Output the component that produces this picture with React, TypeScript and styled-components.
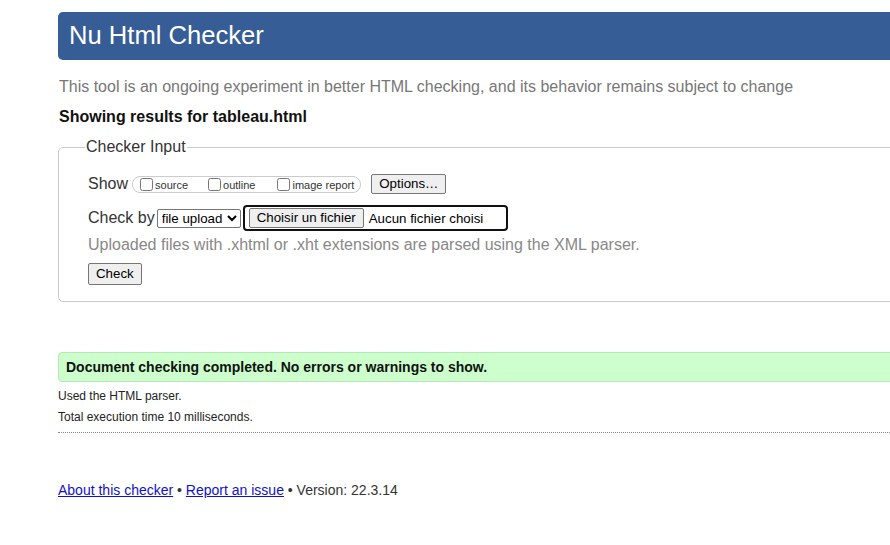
import React from "react";
import styled, { createGlobalStyle } from "styled-components";

const Global = createGlobalStyle`
  html, body { margin: 0; padding: 0; overflow: hidden; background: #fff; }
  body { font-family: "Liberation Sans", Arial, sans-serif; color: #222; }
`;

const Page = styled.div`
  width: 1000px;
  padding: 12px 0 0 58px;
  display: flex;
  flex-direction: column;
`;

const Header = styled.header`
  height: 48px;
  background: #365d95;
  border-radius: 5px;
  display: flex;
  align-items: center;
  padding-left: 11px;
`;

const Title = styled.h1`
  margin: 0;
  font-size: 25.6px;
  font-weight: normal;
  color: #fff;
  line-height: 1;
`;

const Intro = styled.p`
  margin: 17px 0 0 1px;
  font-size: 16px;
  line-height: 20px;
  color: #777;
`;

const ResultsFor = styled.p`
  margin: 10px 0 0 1px;
  font-size: 16px;
  line-height: 20px;
  font-weight: bold;
  color: #111;
`;

const InputFieldset = styled.fieldset`
  margin: 11px 0 0 0;
  border: 1px solid #ccc;
  border-radius: 5px;
  padding: 16px 0 16px 29px;
  min-width: 0;
`;

const Legend = styled.legend`
  font-size: 16px;
  color: #333;
  padding: 0 1px;
  margin-left: -3px;
  line-height: 18px;
`;

const Rows = styled.div`
  display: flex;
  flex-direction: column;
  align-items: flex-start;
`;

const Row = styled.div<{ $h: number; $mt?: number }>`
  display: flex;
  align-items: center;
  height: ${(p) => p.$h}px;
  margin-top: ${(p) => p.$mt ?? 0}px;
`;

const RowLabel = styled.span<{ $mr?: number }>`
  font-size: 16px;
  color: #333;
  margin-right: ${(p) => p.$mr ?? 4}px;
`;

const CheckGroup = styled.span`
  display: inline-flex;
  align-items: center;
  height: 17px;
  border: 1px solid #ccc;
  border-radius: 8px;
  padding: 0 6px 0 7px;
  box-sizing: border-box;
`;

const Box = styled.input`
  width: 13px;
  height: 13px;
  margin: 0 2px 0 0;
`;

const SmallLabel = styled.label<{ $gap?: number }>`
  display: inline-flex;
  align-items: center;
  font-size: 11px;
  color: #333;
  margin-right: ${(p) => p.$gap ?? 0}px;
  padding-top: 1px;
`;

const NativeButton = styled.button<{ $ml?: number }>`
  font-family: "Liberation Sans", Arial, sans-serif;
  font-size: 13.3px;
  color: #000;
  background: #efefef;
  border: 1px solid #767676;
  border-radius: 2px;
  padding: 1px 7px;
  height: 20px;
  line-height: 16px;
  margin-left: ${(p) => p.$ml ?? 0}px;
`;

const Select = styled.select`
  font-family: "Liberation Sans", Arial, sans-serif;
  font-size: 13.3px;
  color: #000;
  height: 19px;
  width: 84px;
  border: 1px solid #767676;
  border-radius: 2px;
  padding: 0;
  background: #fff;
`;

const FileBox = styled.span`
  display: inline-flex;
  align-items: center;
  height: 26px;
  width: 265px;
  box-sizing: border-box;
  border: 2px solid #101010;
  border-radius: 4px;
  margin-left: 2px;
  padding-left: 4px;
`;

const FileText = styled.span`
  font-size: 13.3px;
  color: #000;
  margin-left: 5px;
`;

const Helper = styled.p`
  margin: 5px 0 0 0;
  font-size: 16px;
  line-height: 18px;
  color: #888;
`;

const CheckButton = styled(NativeButton)`
  margin-top: 9px;
  height: 22px;
`;

const Success = styled.div`
  margin-top: 50px;
  height: 30px;
  box-sizing: border-box;
  background: #ccffcc;
  border: 1px solid #b5e8b5;
  border-radius: 4px;
  display: flex;
  align-items: center;
  padding-left: 7px;
  font-size: 14px;
  font-weight: bold;
  color: #111;
`;

const Details = styled.div`
  margin-top: 7px;
  display: flex;
  flex-direction: column;
  gap: 7px;
  padding-bottom: 8px;
  border-bottom: 1px dotted #888;
`;

const Detail = styled.p`
  margin: 0;
  font-size: 12px;
  line-height: 14px;
  color: #222;
`;

const Footer = styled.p`
  margin: 49px 0 0 0;
  font-size: 14px;
  line-height: 16px;
  color: #333;
`;

const Link = styled.a`
  color: #1010cc;
  text-decoration: underline;
`;

export default function App() {
  return (
    <>
      <Global />
      <Page>
        <Header>
          <Title>Nu Html Checker</Title>
        </Header>
        <Intro>
          This tool is an ongoing experiment in better HTML checking, and its behavior remains subject to change
        </Intro>
        <ResultsFor>Showing results for tableau.html</ResultsFor>
        <InputFieldset>
          <Legend>Checker Input</Legend>
          <Rows>
            <Row $h={24}>
              <RowLabel>Show</RowLabel>
              <CheckGroup>
                <SmallLabel $gap={20}>
                  <Box type="checkbox" />source
                </SmallLabel>
                <SmallLabel $gap={22}>
                  <Box type="checkbox" />outline
                </SmallLabel>
                <SmallLabel>
                  <Box type="checkbox" />image report
                </SmallLabel>
              </CheckGroup>
              <NativeButton $ml={10}>Options…</NativeButton>
            </Row>
            <Row $h={26} $mt={9}>
              <RowLabel $mr={2}>Check by</RowLabel>
              <Select defaultValue="file">
                <option value="file">file upload</option>
                <option value="addr">address</option>
                <option value="text">text input</option>
              </Select>
              <FileBox>
                <NativeButton>Choisir un fichier</NativeButton>
                <FileText>Aucun fichier choisi</FileText>
              </FileBox>
            </Row>
            <Helper>Uploaded files with .xhtml or .xht extensions are parsed using the XML parser.</Helper>
            <CheckButton>Check</CheckButton>
          </Rows>
        </InputFieldset>
        <Success>Document checking completed. No errors or warnings to show.</Success>
        <Details>
          <Detail>Used the HTML parser.</Detail>
          <Detail>Total execution time 10 milliseconds.</Detail>
        </Details>
        <Footer>
          <Link href="#">About this checker</Link> • <Link href="#">Report an issue</Link> • Version: 22.3.14
        </Footer>
      </Page>
    </>
  );
}
